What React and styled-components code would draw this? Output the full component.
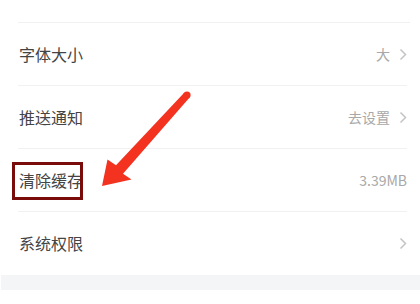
import React from 'react';
import styled, { createGlobalStyle } from 'styled-components';

const GlobalStyle = createGlobalStyle`
  html, body {
    margin: 0;
    padding: 0;
    background: #ffffff;
  }
  body {
    font-family: "Noto Sans CJK SC", "Noto Sans", sans-serif;
  }
`;

const rows = [
  { label: '字体大小', value: '大', chevron: true },
  { label: '推送通知', value: '去设置', chevron: true },
  { label: '清除缓存', value: '3.39MB', chevron: false, marked: true },
  { label: '系统权限', value: '', chevron: true, last: true },
];

const Chevron = () => (
  <svg width="8" height="13" viewBox="0 0 8 13">
    <path d="M1.5 1.5 L6.5 6.5 L1.5 11.5" fill="none" stroke="#c4c4c4" strokeWidth="1.5" />
  </svg>
);

const Arrow = () => (
  <ArrowSvg width="420" height="304" viewBox="0 0 420 304">
    <polygon
      points="184.4,92.6 116,165.2 107.5,159.5 102,186 131.5,179.5 123,173.8 189.6,97.4"
      fill="#f3321f"
    />
    <circle cx="187" cy="95" r="3.6" fill="#f3321f" />
  </ArrowSvg>
);

const App = () => (
  <Page>
    <GlobalStyle />
    <List>
      <Spacer />
      {rows.map((row) => (
        <Row key={row.label} last={row.last}>
          <Label>
            {row.label}
            {row.marked && <Frame />}
          </Label>
          <Side>
            {row.value && <Value>{row.value}</Value>}
            {row.chevron && <Chevron />}
          </Side>
        </Row>
      ))}
    </List>
    <Band />
    <Arrow />
  </Page>
);

export default App;

const Page = styled.div`
  position: relative;
  width: 420px;
  height: 304px;
  overflow: hidden;
  background: #ffffff;
  display: flex;
  flex-direction: column;
`;

const List = styled.div`
  display: flex;
  flex-direction: column;
`;

const Spacer = styled.div`
  height: 22px;
  margin-left: 18px;
  margin-right: 10px;
  border-bottom: 1px solid #f1f1f1;
`;

const Row = styled.div`
  height: 62px;
  margin-left: 18px;
  margin-right: 13px;
  padding-left: 1px;
  display: flex;
  align-items: center;
  justify-content: space-between;
  border-bottom: 1px solid ${(p) => (p.last ? 'transparent' : '#f1f1f1')};
`;

const Label = styled.span`
  position: relative;
  font-size: 16px;
  line-height: 20px;
  color: #444444;
`;

const Frame = styled.span`
  position: absolute;
  left: -7px;
  top: -8px;
  width: 65px;
  height: 32px;
  border: 3px solid #7a0b0b;
`;

const Side = styled.div`
  display: flex;
  align-items: center;
  gap: 9px;
`;

const Value = styled.span`
  font-size: 14px;
  line-height: 18px;
  color: #a8a8a8;
`;

const Band = styled.div`
  height: 15px;
  margin-left: 1px;
  background: #f3f5f7;
`;

const ArrowSvg = styled.svg`
  position: absolute;
  left: 0;
  top: 0;
  pointer-events: none;
`;
